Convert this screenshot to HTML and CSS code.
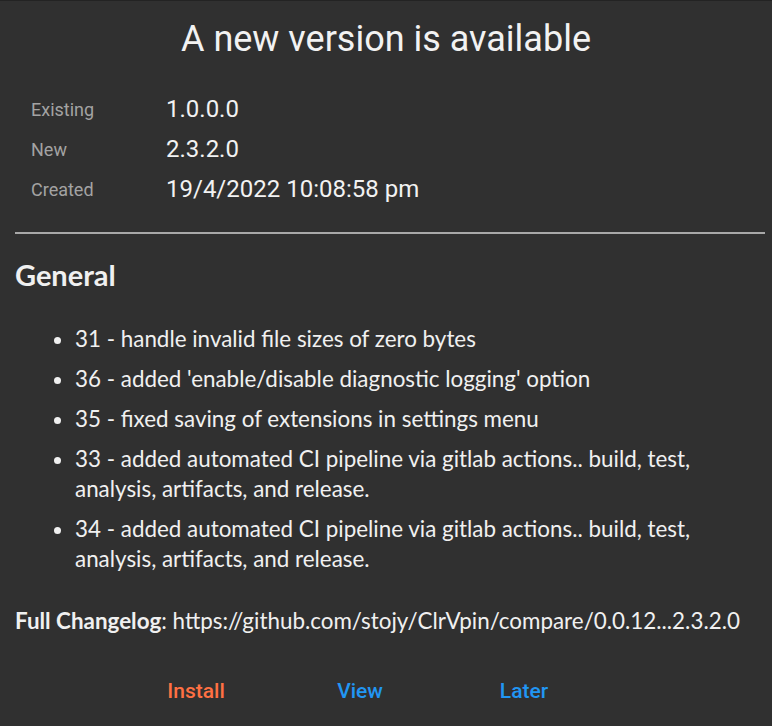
FILE: index.html
```html
<!DOCTYPE html>
<html>
<head>
<meta charset="utf-8">
<link rel="stylesheet" href="styles.css">
</head>
<body>
<div class="dialog">
  <h1 class="title">A new version is available</h1>
  <div class="meta">
    <div class="label">Existing</div><div class="value">1.0.0.0</div>
    <div class="label">New</div><div class="value">2.3.2.0</div>
    <div class="label">Created</div><div class="value">19/4/2022 10:08:58 pm</div>
  </div>
  <div class="divider"></div>
  <div class="notes">
    <h2 class="section">General</h2>
    <ul class="list">
      <li>31 - handle invalid file sizes of zero bytes</li>
      <li>36 - added 'enable/disable diagnostic logging' option</li>
      <li>35 - fixed saving of extensions in settings menu</li>
      <li>33 - added automated CI pipeline via gitlab actions.. build, test, analysis, artifacts, and release.</li>
      <li>34 - added automated CI pipeline via gitlab actions.. build, test, analysis, artifacts, and release.</li>
    </ul>
    <p class="changelog"><strong>Full Changelog</strong>: https://github.com/stojy/ClrVpin/compare/0.0.12...2.3.2.0</p>
  </div>
  <div class="actions">
    <span class="btn install">Install</span>
    <span class="btn">View</span>
    <span class="btn">Later</span>
  </div>
</div>
</body>
</html>
```
FILE: styles.css
```css
html, body {
  margin: 0;
  padding: 0;
  background: #303030;
}
body {
  border-top: 1px solid #232323;
  height: 725px;
  overflow: hidden;
}
.dialog {
  display: flex;
  flex-direction: column;
}
.title {
  margin: 16px 0 0;
  text-align: center;
  font-family: Roboto, sans-serif;
  font-weight: 400;
  font-size: 36px;
  line-height: 44px;
  color: #f2f2f2;
}
.meta {
  margin: 28px 0 0 31px;
  display: grid;
  grid-template-columns: 135px auto;
  grid-auto-rows: 40px;
  align-items: center;
}
.label {
  font-family: Roboto, sans-serif;
  font-size: 18px;
  color: #a3a3a3;
}
.value {
  font-family: Roboto, sans-serif;
  font-size: 24px;
  color: #f2f2f2;
}
.divider {
  margin: 23px 7px 0 15px;
  height: 2px;
  background: #a8a8a8;
}
.notes {
  padding: 0 15px;
  font-family: Lato, sans-serif;
  color: #f0f0f0;
}
.section {
  margin: 24px 0 0;
  font-size: 29px;
  line-height: 34px;
  font-weight: 700;
}
.list {
  margin: 32px 0 0;
  padding-left: 60px;
  font-size: 22.4px;
  line-height: 30px;
}
.list li {
  margin-bottom: 10px;
}
.changelog {
  margin: 33px 0 0;
  font-size: 22.4px;
  line-height: 28px;
}
.changelog strong {
  font-weight: 700;
}
.actions {
  margin: 44px 0 0 114px;
  display: flex;
}
.btn {
  width: 164px;
  text-align: center;
  font-family: Roboto, sans-serif;
  font-weight: 500;
  font-size: 21px;
  color: #2196f3;
}
.btn.install {
  color: #ff7043;
}
```
